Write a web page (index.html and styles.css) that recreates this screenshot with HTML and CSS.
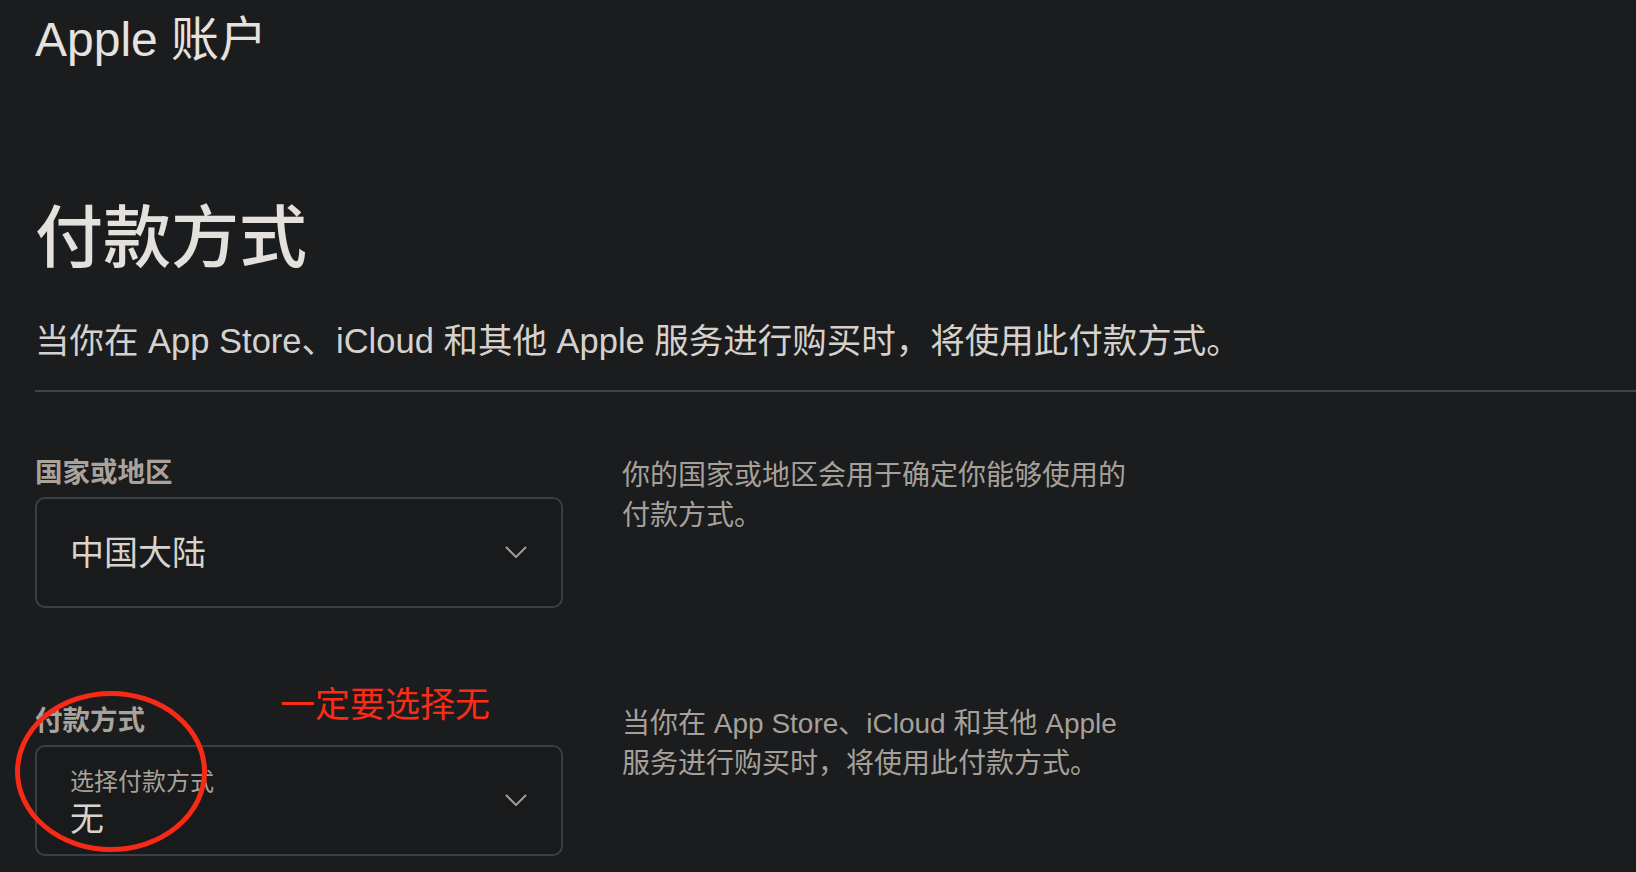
FILE: index.html
```html
<!DOCTYPE html>
<html lang="zh-CN">
<head>
<meta charset="utf-8">
<title>Apple 账户 - 付款方式</title>
<link rel="stylesheet" href="styles.css">
</head>
<body>
<div class="page">
  <header class="brand">Apple 账户</header>
  <h1 class="title">付款方式</h1>
  <p class="subtitle">当你在 App Store、iCloud 和其他 Apple 服务进行购买时，将使用此付款方式。</p>
  <div class="divider"></div>

  <section class="row row-first">
    <div class="field">
      <div class="label">国家或地区</div>
      <div class="select">
        <span class="value">中国大陆</span>
        <svg class="chevron" width="22" height="13" viewBox="0 0 22 13"><polyline points="1.5,1.5 11,11 20.5,1.5" fill="none" stroke="#a39a92" stroke-width="2" stroke-linecap="round" stroke-linejoin="round"/></svg>
      </div>
    </div>
    <p class="desc">你的国家或地区会用于确定你能够使用的付款方式。</p>
  </section>

  <section class="row row-second">
    <div class="field">
      <div class="label">付款方式</div>
      <div class="select select-stacked">
        <div class="stack">
          <div class="hint">选择付款方式</div>
          <div class="value value-stacked">无</div>
        </div>
        <svg class="chevron" width="22" height="13" viewBox="0 0 22 13"><polyline points="1.5,1.5 11,11 20.5,1.5" fill="none" stroke="#a39a92" stroke-width="2" stroke-linecap="round" stroke-linejoin="round"/></svg>
      </div>
    </div>
    <p class="desc">当你在 App Store、iCloud 和其他 Apple 服务进行购买时，将使用此付款方式。</p>
  </section>

  <div class="note">一定要选择无</div>
  <svg class="circle" width="198" height="167" viewBox="0 0 198 167"><ellipse cx="99" cy="83.5" rx="93.5" ry="78" fill="none" stroke="#f72a17" stroke-width="5"/></svg>
</div>
</body>
</html>
```

FILE: styles.css
```css
html, body {
  margin: 0;
  padding: 0;
  background: #1b1c1e;
}

body {
  font-family: "Liberation Sans", "Noto Sans CJK SC", sans-serif;
  color: #e4e0dc;
  overflow: hidden;
}

.page {
  position: relative;
  padding-left: 35px;
  min-height: 872px;
  box-sizing: border-box;
}

.brand {
  padding-top: 12px;
  font-size: 48px;
  line-height: 56px;
  font-weight: 400;
  color: #e6e2de;
}

.title {
  margin: 130px 0 0;
  font-size: 68px;
  line-height: 80px;
  font-weight: 500;
  color: #e4e0dc;
}

.subtitle {
  margin: 41px 0 0;
  font-size: 34.5px;
  line-height: 44px;
  color: #d6d1cc;
}

.divider {
  margin-top: 27px;
  height: 2px;
  background: #3d4644;
}

.row {
  display: grid;
  grid-template-columns: 528px 520px;
  column-gap: 59px;
  align-items: start;
}

.row-first {
  margin-top: 64px;
}

.row-second {
  margin-top: 96px;
}

.label {
  font-size: 27.5px;
  line-height: 34px;
  font-weight: 600;
  color: #aaa39b;
}

.select {
  margin-top: 7px;
  height: 111px;
  box-sizing: border-box;
  border: 2px solid #3a4042;
  border-radius: 10px;
  background: #191a1b;
  display: flex;
  align-items: center;
  padding: 0 34px 0 33px;
}

.value {
  font-size: 34px;
  line-height: 40px;
  color: #d8d3cd;
}

.value-stacked {
  margin-top: 3px;
}

.chevron {
  margin-left: auto;
  flex: none;
}

.stack {
  align-self: flex-start;
  padding-top: 21px;
}

.hint {
  font-size: 24px;
  line-height: 28px;
  color: #a9a29a;
}

.desc {
  margin: 0;
  font-size: 28px;
  line-height: 40px;
  color: #a7a09a;
}

.note {
  position: absolute;
  left: 280px;
  top: 685px;
  font-size: 35px;
  line-height: 40px;
  color: #fc2b16;
}

.circle {
  position: absolute;
  left: 12px;
  top: 688px;
}
```
